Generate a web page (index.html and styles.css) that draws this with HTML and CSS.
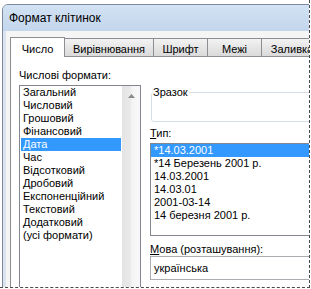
FILE: index.html
```html
<!DOCTYPE html>
<html lang="uk">

<head>
    <meta charset="UTF-8">
    <meta name="viewport" content="width=device-width, initial-scale=1.0">
    <title>Формат клітинок</title>
    <link rel="stylesheet" href="styles.css">
</head>

<body>
    <div class="screen">
        <div class="window">
            <div class="titlebar">Формат клітинок</div>
            <div class="client">
                <div class="tabs">
                    <div class="tab tab-number active">Число</div>
                    <div class="tab tab-align">Вирівнювання</div>
                    <div class="tab tab-font">Шрифт</div>
                    <div class="tab tab-border">Межі</div>
                    <div class="tab tab-fill">Заливка</div>
                </div>
                <div class="panel">
                    <div class="col-left">
                        <div class="label">Числові формати:</div>
                        <div class="listbox categories">
                            <ul class="items">
                                <li>Загальний</li>
                                <li>Числовий</li>
                                <li>Грошовий</li>
                                <li>Фінансовий</li>
                                <li class="selected">Дата</li>
                                <li>Час</li>
                                <li>Відсотковий</li>
                                <li>Дробовий</li>
                                <li>Експоненційний</li>
                                <li>Текстовий</li>
                                <li>Додатковий</li>
                                <li>(усі формати)</li>
                            </ul>
                            <div class="scrollbar">
                                <div class="scroll-up">
                                    <svg width="7" height="4" viewBox="0 0 7 4"><polygon points="3.5,0 7,4 0,4" fill="#8a8a8a"/></svg>
                                </div>
                            </div>
                        </div>
                    </div>
                    <div class="col-right">
                        <fieldset class="sample">
                            <legend>Зразок</legend>
                            <div class="sample-value"></div>
                        </fieldset>
                        <div class="label label-type"><u>Т</u>ип:</div>
                        <ul class="listbox types">
                            <li class="selected">*14.03.2001</li>
                            <li>*14 Березень 2001 р.</li>
                            <li>14.03.2001</li>
                            <li>14.03.01</li>
                            <li>2001-03-14</li>
                            <li>14 березня 2001 р.</li>
                        </ul>
                        <div class="label label-locale"><u>М</u>ова (розташування):</div>
                        <div class="combo">українська</div>
                    </div>
                </div>
            </div>
        </div>
    </div>
</body>

</html>
```

FILE: styles.css
```css
body {
    margin: 0;
    font-family: "Liberation Sans", Arial, sans-serif;
    font-size: 11px;
    color: #000;
    background-color: #fff;
}

.screen {
    width: 309px;
    height: 287px;
    border-right: 1px dashed #4a4a4a;
    border-bottom: 1px dashed #4a4a4a;
    overflow: hidden;
}

.window {
    width: 440px;
    margin: 4px 0 0 2px;
    padding: 0 3px;
    border: 1px solid #7b8a9c;
    border-radius: 6px 6px 0 0;
    background-color: #dbe4ee;
    overflow: hidden;
}

.titlebar {
    height: 26px;
    line-height: 26px;
    margin: 0 -3px;
    padding-left: 6px;
    font-size: 12px;
    background: linear-gradient(#d3e2f4, #c3d6ed);
}

.client {
    height: 300px;
    padding: 6px 0 0 4px;
    background-color: #f5f5f5;
}

/* tabs */
.tabs {
    display: flex;
    align-items: flex-end;
}

.tab {
    box-sizing: border-box;
    height: 18px;
    padding-top: 3px;
    line-height: 15px;
    margin-left: -1px;
    text-align: center;
    white-space: nowrap;
    border: 1px solid #8c8e94;
    border-bottom: none;
    background: linear-gradient(#f3f3f3, #e6e6e6 50%, #dadada);
}

.tab.active {
    position: relative;
    z-index: 1;
    height: 20px;
    padding-top: 4px;
    margin-left: 0;
    margin-bottom: -1px;
    background: #fff;
}

.tab-number { width: 55px; }
.tab-align { width: 90px; }
.tab-font { width: 55px; }
.tab-border { width: 55px; }
.tab-fill { width: 62px; }

.panel {
    display: flex;
    align-items: flex-start;
    gap: 9px;
    height: 260px;
    padding: 11px 0 0 8px;
    border: 1px solid #8c8e94;
    background-color: #fff;
}

.label {
    line-height: 15px;
    white-space: nowrap;
}

/* number categories */
.col-left {
    width: 122px;
}

.listbox {
    border: 1px solid #828790;
    background-color: #fff;
}

.categories {
    display: flex;
    height: 230px;
    margin-top: 2px;
}

.items,
.types {
    list-style: none;
    margin: 0;
    padding: 0;
}

.items {
    width: 102px;
}

.items li {
    line-height: 13px;
    margin: 0 1px;
    padding-left: 2px;
    white-space: nowrap;
}

.selected {
    background-color: #3399ff;
    color: #fff;
}

.scrollbar {
    width: 18px;
    background: linear-gradient(90deg, #e4e4e4, #e9e9e9 45%, #f4f4f4 55%, #f8f8f8);
}

.scroll-up {
    display: flex;
    align-items: center;
    justify-content: center;
    height: 20px;
}

/* type column */
.col-right {
    width: 260px;
}

.sample {
    margin: 17px 0 0 1px;
    padding: 0;
    min-width: 0;
    border: 1px solid #d5dfe5;
    border-radius: 3px;
}

.sample legend {
    padding: 0 1px;
    line-height: 15px;
}

.sample-value {
    height: 21px;
}

.label-type {
    margin-top: 4px;
}

.types {
    box-sizing: border-box;
    height: 93px;
    margin-top: 2px;
}

.types li {
    line-height: 13px;
    padding-left: 3px;
    white-space: nowrap;
}

.label-locale {
    margin-top: 6px;
    line-height: 14px;
}

.combo {
    box-sizing: border-box;
    height: 24px;
    line-height: 22px;
    padding-left: 3px;
    border: 1px solid #abadb3;
    background-color: #fff;
}
```
